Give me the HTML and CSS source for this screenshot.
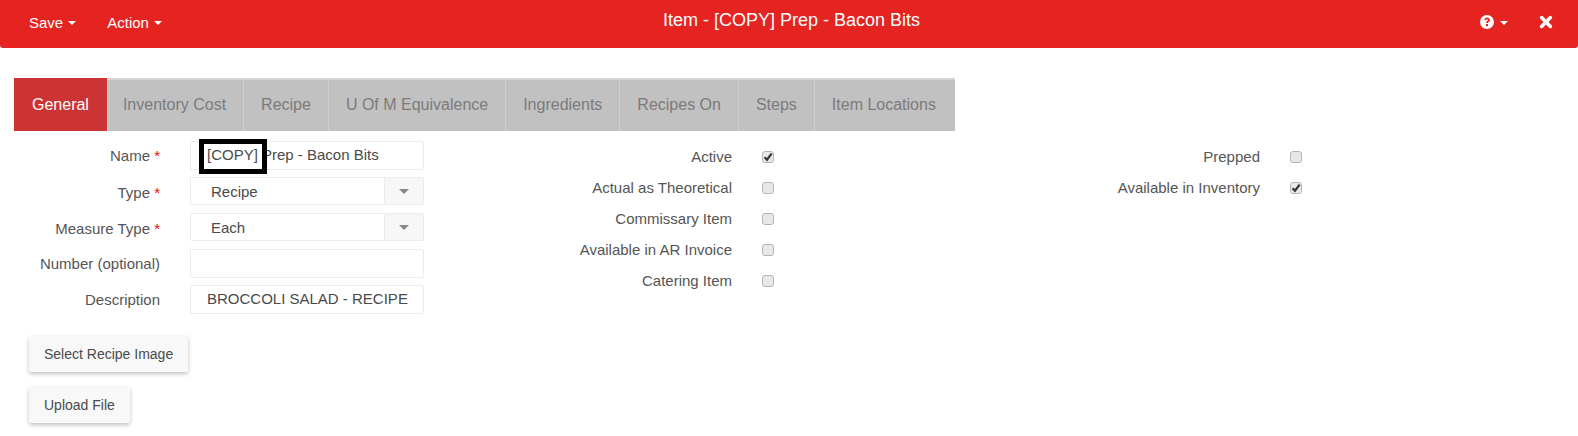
FILE: index.html

```html
<!DOCTYPE html>
<html lang="en">
<head>
  <meta charset="UTF-8" />
  <title>Item - [COPY] Prep - Bacon Bits</title>
  <link rel="stylesheet" href="styles.css">
</head>
<body>
  <nav class="topbar">
    <div class="topbar-left">
      <a class="nav-link">Save <span class="caret"></span></a>
      <a class="nav-link">Action <span class="caret"></span></a>
    </div>
    <div class="topbar-title">Item - [COPY] Prep - Bacon Bits</div>
    <div class="topbar-right">
      <a class="nav-link help-link">
        <svg class="help-icon" viewBox="0 0 16 16" width="16" height="16">
          <path fill="#fff" fill-rule="evenodd" d="M8 1a7 7 0 1 0 0 14A7 7 0 0 0 8 1zM5.3 6.1C5.4 4.5 6.6 3.6 8.1 3.6c1.6 0 2.8 1 2.8 2.4 0 1-.6 1.5-1.2 1.9-.6.4-.8.6-.8 1.2H7.1c0-1.1.4-1.6 1-2 .5-.4.9-.6.9-1.1 0-.5-.4-.8-.9-.8-.6 0-1 .4-1 1.1zM7 10h2v2.2H7z"/>
        </svg>
        <span class="caret"></span>
      </a>
      <a class="nav-link close-link">
        <svg viewBox="0 0 14 14" width="14" height="14">
          <path stroke="#fff" stroke-width="3.6" stroke-linecap="round" d="M2.6 2.6l8.8 8.8M11.4 2.6l-8.8 8.8"/>
        </svg>
      </a>
    </div>
  </nav>

  <main class="content">
    <ul class="tabs">
      <li class="tab active">General</li>
      <li class="tab">Inventory Cost</li>
      <li class="tab">Recipe</li>
      <li class="tab">U Of M Equivalence</li>
      <li class="tab">Ingredients</li>
      <li class="tab">Recipes On</li>
      <li class="tab">Steps</li>
      <li class="tab">Item Locations</li>
    </ul>

    <form class="item-form">
      <div class="col-fields">
        <div class="field">
          <label>Name <span class="req">*</span></label>
          <div class="text-box name-box">[COPY] Prep - Bacon Bits
            <span class="highlight"></span>
          </div>
        </div>
        <div class="field select-field">
          <label>Type <span class="req">*</span></label>
          <div class="select-box">
            <span class="select-value">Recipe</span>
            <span class="select-arrow"><span class="arrow-down"></span></span>
          </div>
        </div>
        <div class="field select-field">
          <label>Measure Type <span class="req">*</span></label>
          <div class="select-box">
            <span class="select-value">Each</span>
            <span class="select-arrow"><span class="arrow-down"></span></span>
          </div>
        </div>
        <div class="field">
          <label>Number (optional)</label>
          <div class="text-box"></div>
        </div>
        <div class="field">
          <label>Description</label>
          <div class="text-box">BROCCOLI SALAD - RECIPE</div>
        </div>
      </div>

      <div class="col-checks col-middle">
        <div class="check-row">
          <label>Active</label>
          <span class="check on"><svg viewBox="0 0 12 12" width="12" height="12"><path fill="none" stroke="#333" stroke-width="2.2" d="M2.6 6.2l2.4 2.5 4.6-6"/></svg></span>
        </div>
        <div class="check-row"><label>Actual as Theoretical</label><span class="check"></span></div>
        <div class="check-row"><label>Commissary Item</label><span class="check"></span></div>
        <div class="check-row"><label>Available in AR Invoice</label><span class="check"></span></div>
        <div class="check-row"><label>Catering Item</label><span class="check"></span></div>
      </div>

      <div class="col-checks col-right">
        <div class="check-row"><label>Prepped</label><span class="check"></span></div>
        <div class="check-row">
          <label>Available in Inventory</label>
          <span class="check on"><svg viewBox="0 0 12 12" width="12" height="12"><path fill="none" stroke="#333" stroke-width="2.2" d="M2.6 6.2l2.4 2.5 4.6-6"/></svg></span>
        </div>
      </div>
    </form>

    <div class="actions">
      <button type="button" class="btn">Select Recipe Image</button>
      <button type="button" class="btn">Upload File</button>
    </div>
  </main>
</body>
</html>
```

FILE: styles.css

```css
* {
  box-sizing: border-box;
}

body {
  font-family: "Liberation Sans", Arial, sans-serif;
  font-size: 15px;
  color: #555;
  background: #fff;
  margin: 0;
}

.topbar {
  position: relative;
  display: flex;
  justify-content: space-between;
  height: 48px;
  background: #e52320;
  color: #fff;
  border-radius: 0 0 3px 3px;
}

.topbar-left,
.topbar-right {
  display: flex;
  align-items: center;
}

.topbar-left {
  padding-left: 29px;
  gap: 31px;
}

.topbar-right {
  padding-right: 25px;
}

.topbar-title {
  flex: 1;
  text-align: center;
  font-size: 18px;
  line-height: 41px;
  padding-right: 58px;
}

.nav-link {
  display: flex;
  align-items: center;
  gap: 5px;
  font-size: 15px;
  color: #fff;
  padding-bottom: 4px;
}

.help-link {
  margin-right: 31px;
}

.caret {
  display: inline-block;
  border-top: 4px solid #fff;
  border-left: 4px solid transparent;
  border-right: 4px solid transparent;
  margin-top: 2px;
}

.content {
  padding: 30px 14px 13px;
}

.tabs {
  display: flex;
  width: 941px;
  height: 53px;
  margin: 0;
  padding: 0;
  list-style: none;
  background: #c1c1c1;
  border-top: 2px solid #d4d4d4;
}

.tab {
  padding: 0 17px;
  font-size: 16px;
  line-height: 50px;
  color: #7b7b7b;
  white-space: nowrap;
  border-left: 1px solid #d0d0d0;
}

.tab.active + .tab {
  padding: 0 17px 0 15px;
}

.tab.active {
  padding: 0 18px;
  background: #cc3333;
  color: #fff;
  margin-top: -2px;
  height: 53px;
  line-height: 54px;
  border-left: 0;
}

.item-form {
  display: flex;
  padding-top: 10px;
}

.col-fields {
  width: 410px;
  display: flex;
  flex-direction: column;
}

.field {
  display: flex;
  align-items: flex-start;
  height: 36px;
}

.field label {
  width: 146px;
  text-align: right;
  margin-right: 30px;
  flex-shrink: 0;
  line-height: 29px;
}

.select-field label {
  line-height: 31px;
}

.req {
  color: #f00;
}

.text-box,
.select-box {
  width: 234px;
  height: 29px;
  border: 1px solid #ececec;
  border-radius: 2px;
  background: #fff;
  color: #4a4a4a;
}

.text-box {
  padding-left: 16px;
  line-height: 26px;
  white-space: nowrap;
}

.name-box {
  position: relative;
}

.highlight {
  position: absolute;
  left: 8px;
  top: -3px;
  width: 68px;
  height: 35px;
  border: 5px solid #000;
}

.select-box {
  display: flex;
  height: 28px;
}

.select-value {
  flex: 1;
  padding-left: 20px;
  line-height: 28px;
}

.select-arrow {
  display: flex;
  align-items: center;
  justify-content: center;
  width: 39px;
  background: #f7f7f7;
  border-left: 1px solid #ececec;
}

.arrow-down {
  border-top: 5px solid #888;
  border-left: 5px solid transparent;
  border-right: 5px solid transparent;
}

.col-checks {
  display: flex;
  flex-direction: column;
  gap: 11px;
  padding-top: 6px;
}

.col-middle {
  width: 380px;
}

.col-right {
  width: 528px;
}

.check-row {
  display: flex;
  align-items: center;
  justify-content: flex-end;
  height: 20px;
  padding-right: 30px;
}

.check-row label {
  margin-right: 30px;
  padding-bottom: 2px;
}

.check {
  display: block;
  width: 12px;
  height: 12px;
  background: #e8e8e8;
  border: 1px solid #b5b5b5;
  border-radius: 3px;
  position: relative;
  flex-shrink: 0;
}

.check svg {
  position: absolute;
  left: -1px;
  top: -1px;
}

.actions {
  display: flex;
  flex-direction: column;
  align-items: flex-start;
  gap: 15px;
  padding: 15px 0 0 15px;
}

.btn {
  height: 36px;
  padding: 0 15px;
  font-family: inherit;
  font-size: 14px;
  color: #4a4a4a;
  background: #f8f8f8;
  border: 0;
  border-radius: 2px;
  box-shadow: 0 2px 4px rgba(0,0,0,0.25);
}
```
